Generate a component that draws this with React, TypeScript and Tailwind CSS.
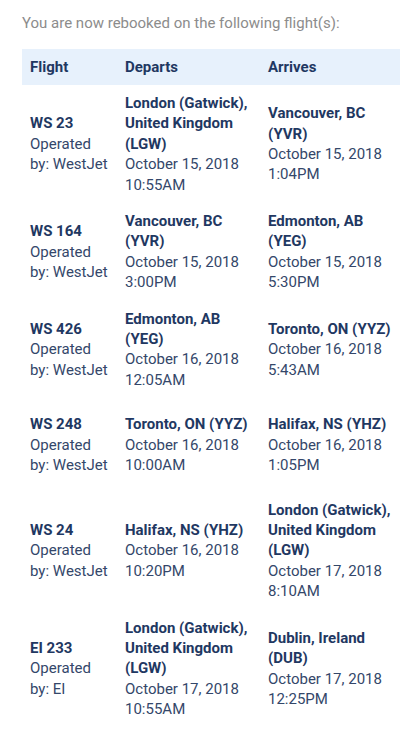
import React from 'react';

type Leg = {
    flight: string;
    operator: string;
    departs: string;
    departsAt: string;
    arrives: string;
    arrivesAt: string;
    pad?: string;
};

const legs: Leg[] = [
    {
        flight: 'WS 23',
        operator: 'WestJet',
        departs: 'London (Gatwick), United Kingdom (LGW)',
        departsAt: 'October 15, 2018 10:55AM',
        arrives: 'Vancouver, BC (YVR)',
        arrivesAt: 'October 15, 2018 1:04PM',
    },
    {
        flight: 'WS 164',
        operator: 'WestJet',
        departs: 'Vancouver, BC (YVR)',
        departsAt: 'October 15, 2018 3:00PM',
        arrives: 'Edmonton, AB (YEG)',
        arrivesAt: 'October 15, 2018 5:30PM',
    },
    {
        flight: 'WS 426',
        operator: 'WestJet',
        departs: 'Edmonton, AB (YEG)',
        departsAt: 'October 16, 2018 12:05AM',
        arrives: 'Toronto, ON (YYZ)',
        arrivesAt: 'October 16, 2018 5:43AM',
    },
    {
        flight: 'WS 248',
        operator: 'WestJet',
        departs: 'Toronto, ON (YYZ)',
        departsAt: 'October 16, 2018 10:00AM',
        arrives: 'Halifax, NS (YHZ)',
        arrivesAt: 'October 16, 2018 1:05PM',
        pad: 'pt-4 pb-4',
    },
    {
        flight: 'WS 24',
        operator: 'WestJet',
        departs: 'Halifax, NS (YHZ)',
        departsAt: 'October 16, 2018 10:20PM',
        arrives: 'London (Gatwick), United Kingdom (LGW)',
        arrivesAt: 'October 17, 2018 8:10AM',
    },
    {
        flight: 'EI 233',
        operator: 'EI',
        departs: 'London (Gatwick), United Kingdom (LGW)',
        departsAt: 'October 17, 2018 10:55AM',
        arrives: 'Dublin, Ireland (DUB)',
        arrivesAt: 'October 17, 2018 12:25PM',
    },
];

const App: React.FC = () => {
    return (
        <div
            className="w-[400px] h-[742px] overflow-hidden bg-white pl-[22px] pt-[13px]"
            style={{ fontFamily: 'Roboto, "Noto Sans", Arial, sans-serif' }}
        >
            <p className="text-[15px] leading-[20px] text-[#8c8c8c]">
                You are now rebooked on the following flight(s):
            </p>

            <table className="mt-[16px] w-[378px] table-fixed border-collapse text-left text-[15px] leading-[20.4px] text-[#34476a]">
                <colgroup>
                    <col className="w-[95px]" />
                    <col className="w-[143px]" />
                    <col className="w-[140px]" />
                </colgroup>
                <thead>
                    <tr className="bg-[#e7f1fc] h-[36px]">
                        <th className="px-2 font-bold text-[#1f3862] align-middle">Flight</th>
                        <th className="px-2 font-bold text-[#1f3862] align-middle">Departs</th>
                        <th className="px-2 font-bold text-[#1f3862] align-middle">Arrives</th>
                    </tr>
                </thead>
                <tbody>
                    {legs.map((leg) => (
                        <tr key={leg.flight}>
                            <td className={`px-2 align-middle ${leg.pad ?? 'py-2'}`}>
                                <div className="font-bold text-[#1f3862]">{leg.flight}</div>
                                <div>Operated by: {leg.operator}</div>
                            </td>
                            <td className={`px-2 align-middle ${leg.pad ?? 'py-2'}`}>
                                <div className="font-bold text-[#1f3862]">{leg.departs}</div>
                                <div>{leg.departsAt}</div>
                            </td>
                            <td className={`px-2 align-middle ${leg.pad ?? 'py-2'}`}>
                                <div className="font-bold text-[#1f3862]">{leg.arrives}</div>
                                <div>{leg.arrivesAt}</div>
                            </td>
                        </tr>
                    ))}
                </tbody>
            </table>
        </div>
    );
};

export default App;
